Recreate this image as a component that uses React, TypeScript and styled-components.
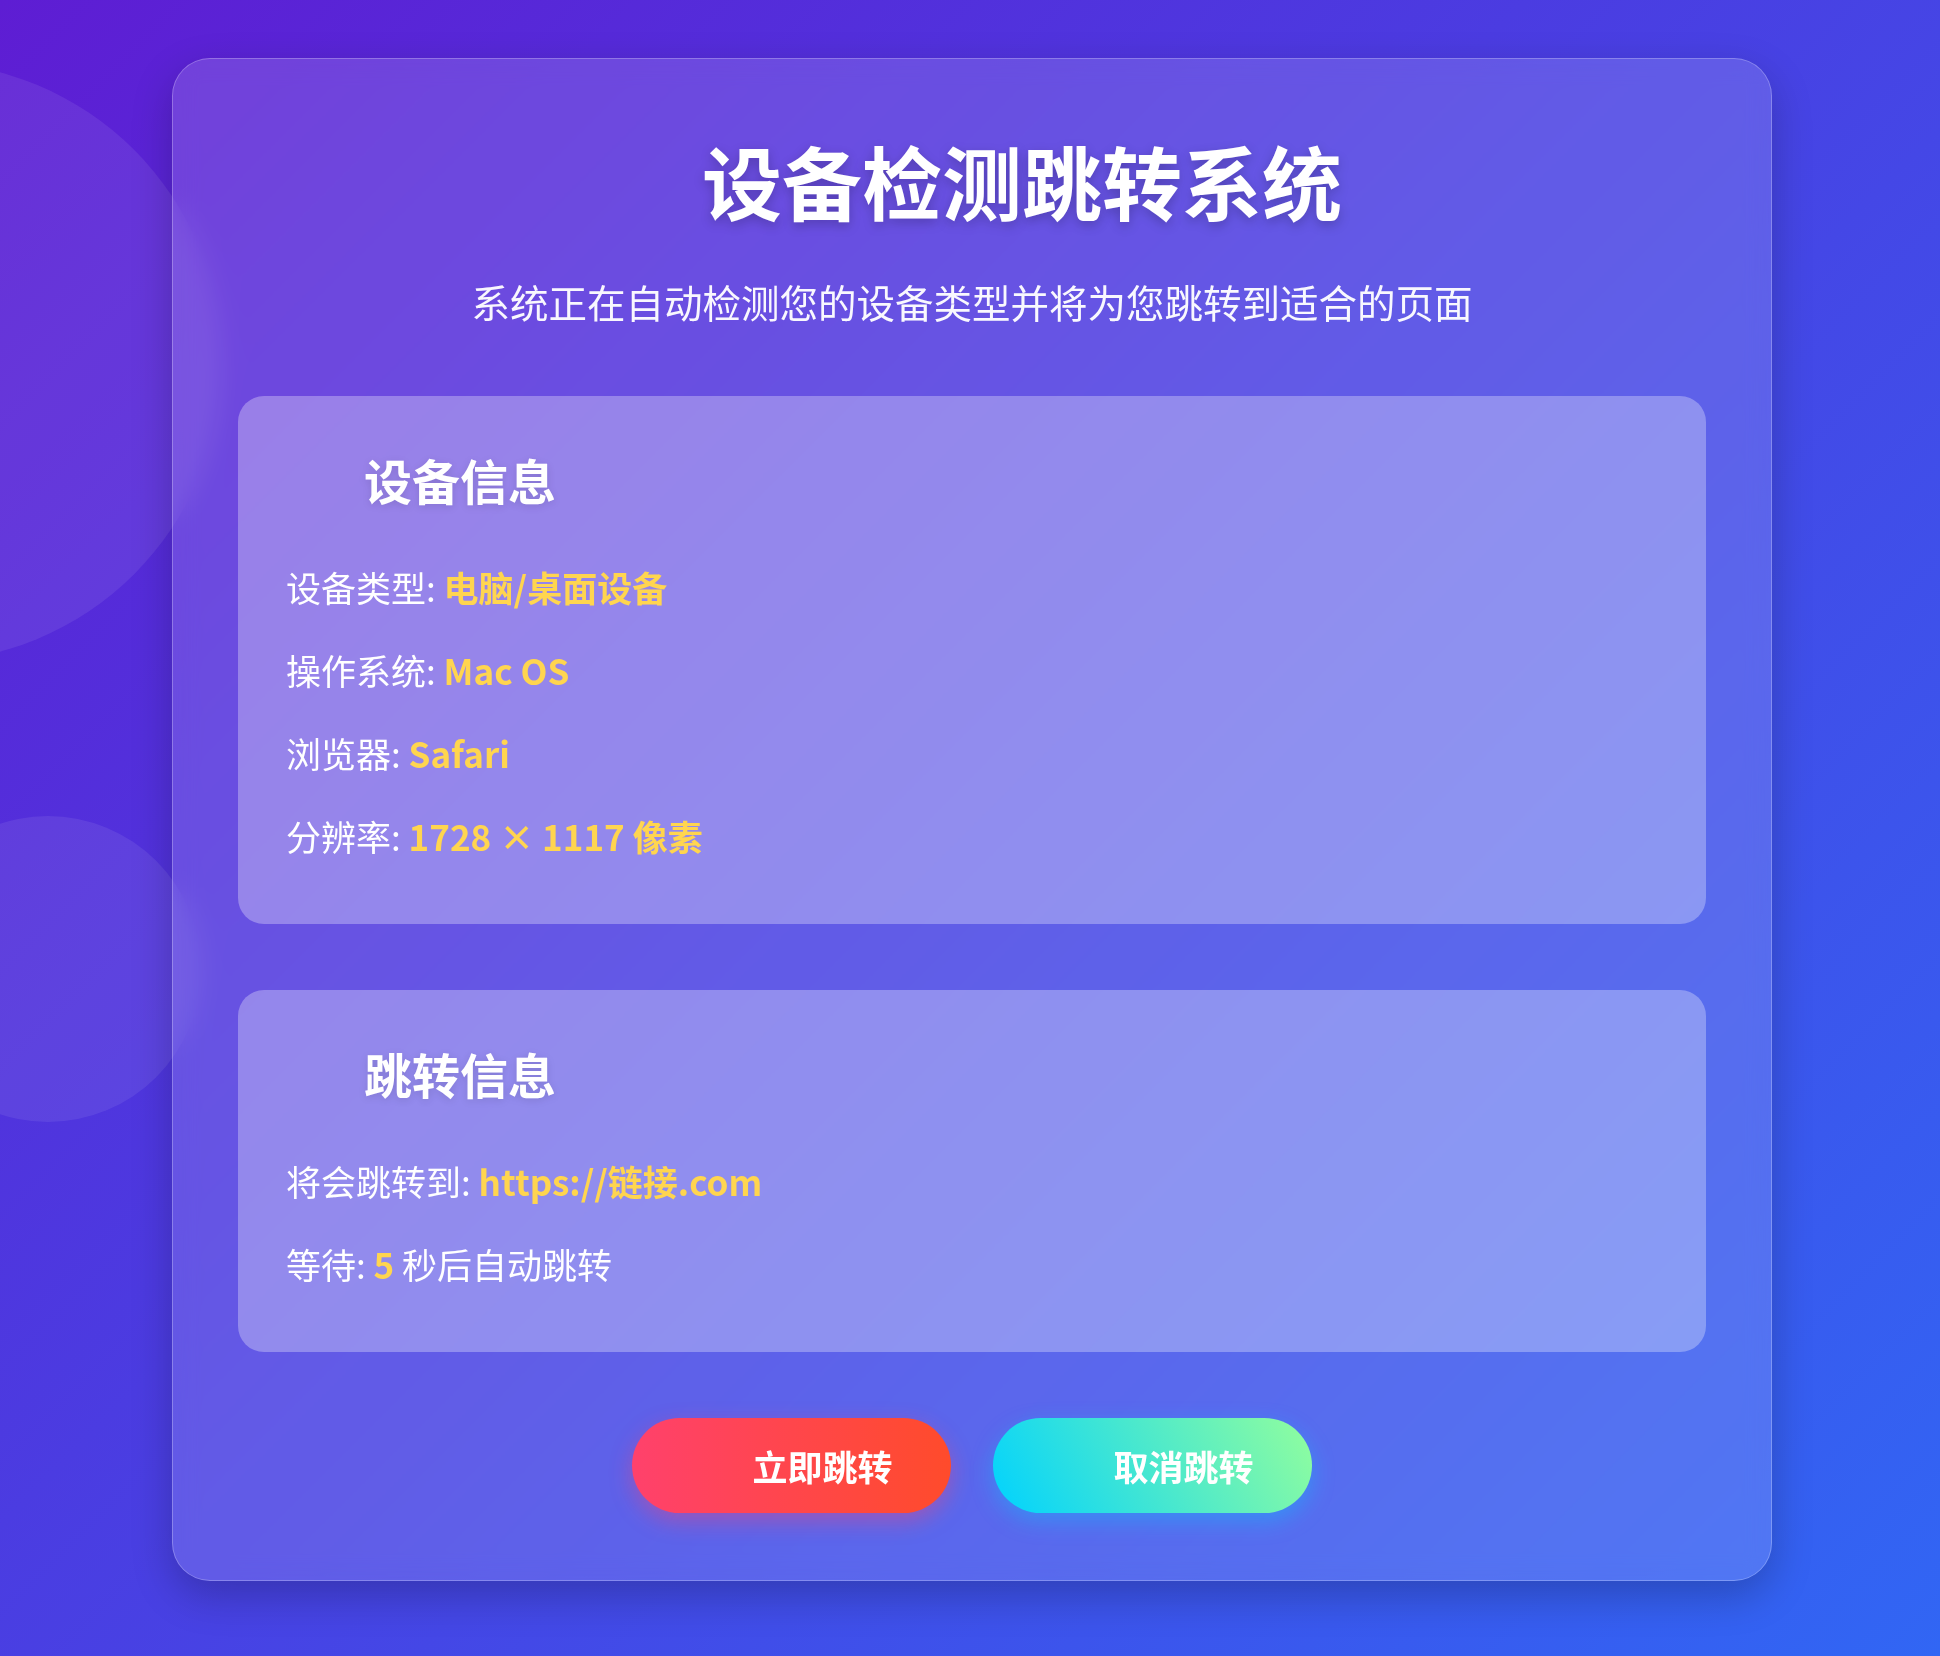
import React from "react";
import styled, { createGlobalStyle } from "styled-components";

const GlobalStyle = createGlobalStyle`
  * {
    box-sizing: border-box;
  }

  html, body {
    margin: 0;
    padding: 0;
  }

  body {
    min-height: 100vh;
    font-family: "Noto Sans CJK SC", "Noto Sans", sans-serif;
    background: linear-gradient(135deg, #5e1dd3 0%, #3166f4 100%);
    color: #ffffff;
    overflow: hidden;
  }
`;

const Page = styled.div`
  position: relative;
  min-height: 1656px;
  display: flex;
  justify-content: center;
  align-items: flex-start;
  padding: 58px 0 0 4px;
`;

const Bubble = styled.div<{ $size: number; $top: number; $left: number }>`
  position: absolute;
  width: ${(p) => p.$size}px;
  height: ${(p) => p.$size}px;
  top: ${(p) => p.$top}px;
  left: ${(p) => p.$left}px;
  border-radius: 50%;
  background: rgba(255, 255, 255, 0.08);
  pointer-events: none;
`;

const Card = styled.main`
  position: relative;
  width: 1600px;
  padding: 72px 65px 67px;
  border-radius: 38px;
  background: rgba(255, 255, 255, 0.14);
  border: 1px solid rgba(255, 255, 255, 0.25);
  backdrop-filter: blur(12px);
  box-shadow: 0 15px 40px rgba(0, 0, 0, 0.22);
  display: flex;
  flex-direction: column;
  align-items: stretch;
`;

const Title = styled.h1`
  margin: 0 0 46px;
  text-align: center;
  font-size: 80px;
  line-height: 96px;
  font-weight: 700;
  text-shadow: 0 4px 12px rgba(0, 0, 0, 0.22);
`;

const Subtitle = styled.p`
  margin: 0 0 67px;
  text-align: center;
  font-size: 38.5px;
  line-height: 56px;
  font-weight: 400;
  color: rgba(255, 255, 255, 0.96);
`;

const IconSlot = styled.span<{ $w: number }>`
  display: inline-block;
  width: ${(p) => p.$w}px;
`;

const Section = styled.section`
  padding: 55px 48px 60px;
  border-radius: 26px;
  background: rgba(255, 255, 255, 0.3);
  & + & {
    margin-top: 66px;
  }
`;

const SectionTitle = styled.h2`
  margin: 0 0 52px;
  font-size: 48px;
  line-height: 56px;
  font-weight: 700;
  text-shadow: 0 2px 8px rgba(0, 0, 0, 0.12);
`;

const Rows = styled.div`
  display: flex;
  flex-direction: column;
  gap: 27px;
`;

const Row = styled.p`
  margin: 0;
  font-size: 35px;
  line-height: 56px;
  font-weight: 400;
`;

const Value = styled.span`
  color: #ffd54f;
  font-weight: 700;
`;

const Actions = styled.div`
  margin-top: 66px;
  display: flex;
  justify-content: center;
  gap: 42px;
`;

const Button = styled.button<{ $variant: "go" | "cancel" }>`
  width: 319px;
  height: 95px;
  border: none;
  border-radius: 48px;
  display: inline-flex;
  align-items: center;
  justify-content: center;
  font-family: "Noto Sans CJK SC", "Noto Sans", sans-serif;
  font-size: 35px;
  font-weight: 700;
  color: #ffffff;
  cursor: pointer;
  background: ${(p) =>
    p.$variant === "go"
      ? "linear-gradient(90deg, #ff416c 0%, #ff4b2b 100%)"
      : "linear-gradient(60deg, #00d2ff 0%, #92fe9d 100%)"};
  box-shadow: ${(p) =>
    p.$variant === "go"
      ? "0 8px 22px rgba(255, 65, 108, 0.4)"
      : "0 8px 22px rgba(0, 210, 255, 0.35)"};
`;

const deviceRows = [
  { label: "设备类型", value: "电脑/桌面设备" },
  { label: "操作系统", value: "Mac OS" },
  { label: "浏览器", value: "Safari" },
  { label: "分辨率", value: "1728 × 1117 像素" },
];

export default function App() {
  return (
    <>
      <GlobalStyle />
      <Page>
        <Bubble $size={600} $top={62} $left={-378} />
        <Bubble $size={306} $top={816} $left={-105} />
        <Card>
          <Title>
            <IconSlot $w={100} />
            设备检测跳转系统
          </Title>
          <Subtitle>系统正在自动检测您的设备类型并将为您跳转到适合的页面</Subtitle>

          <Section>
            <SectionTitle>
              <IconSlot $w={78} />
              设备信息
            </SectionTitle>
            <Rows>
              {deviceRows.map((r) => (
                <Row key={r.label}>
                  {r.label}: <Value>{r.value}</Value>
                </Row>
              ))}
            </Rows>
          </Section>

          <Section>
            <SectionTitle>
              <IconSlot $w={78} />
              跳转信息
            </SectionTitle>
            <Rows>
              <Row>
                将会跳转到: <Value>https://链接.com</Value>
              </Row>
              <Row>
                等待: <Value>5</Value> 秒后自动跳转
              </Row>
            </Rows>
          </Section>

          <Actions>
            <Button $variant="go">
              <IconSlot $w={62} />
              立即跳转
            </Button>
            <Button $variant="cancel">
              <IconSlot $w={62} />
              取消跳转
            </Button>
          </Actions>
        </Card>
      </Page>
    </>
  );
}
